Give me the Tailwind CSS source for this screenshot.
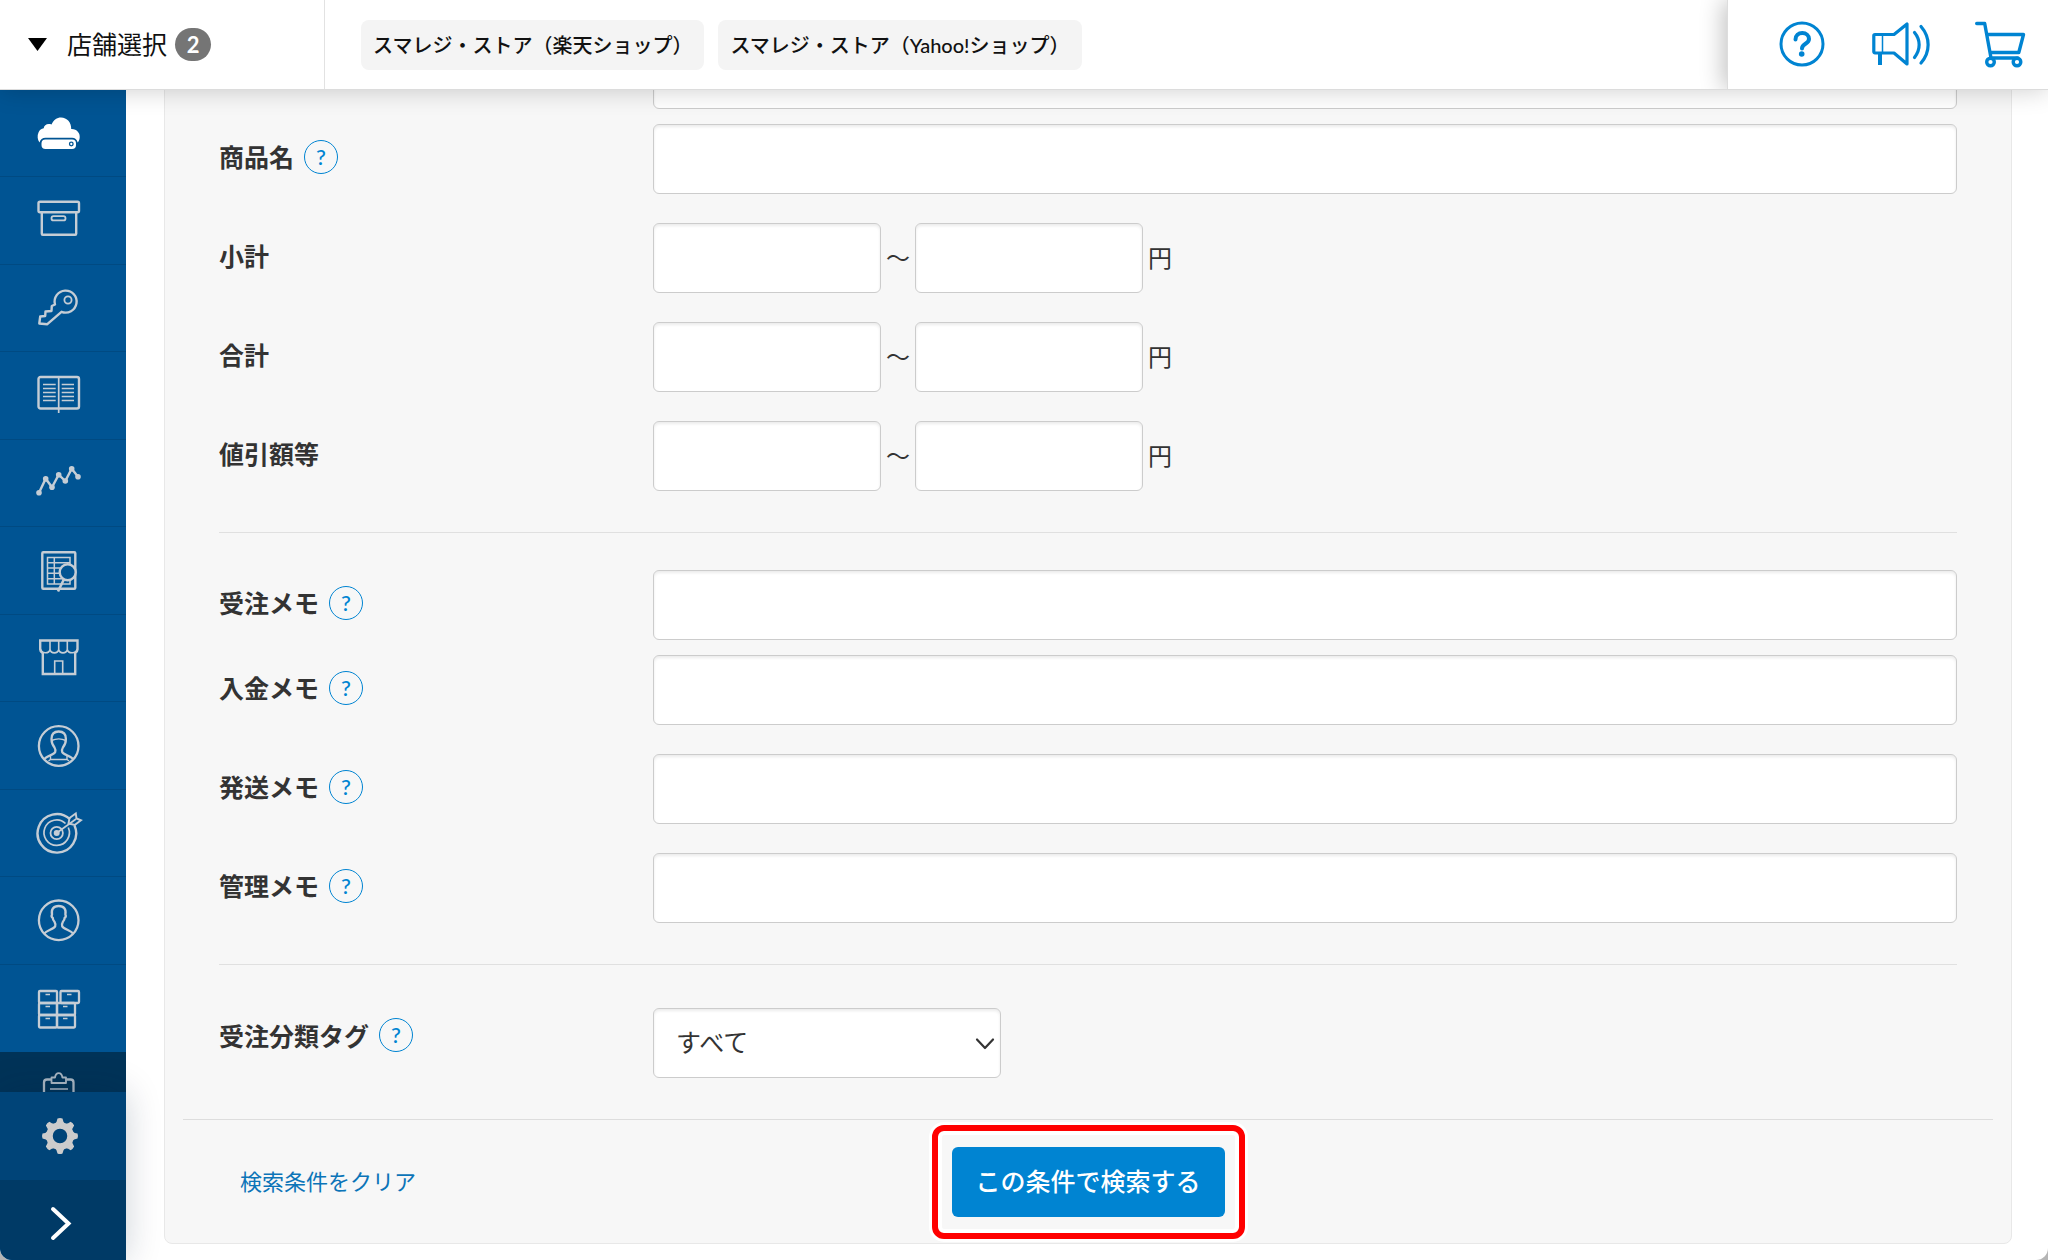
<!DOCTYPE html>
<html lang="ja" class="bg-[#b5b5b5]">
<head>
    <meta charset="UTF-8">
    <meta name="viewport" content="width=device-width, initial-scale=1.0">
    <title>受注検索</title>
    <script src="https://cdn.jsdelivr.net/npm/@tailwindcss/browser@4"></script>
</head>
<body class="h-screen flex flex-col overflow-hidden rounded-b-xl bg-white text-[#333] text-2xl font-['Lato','Noto_Sans_CJK_JP',sans-serif]">

    <!-- Top bar -->
    <header class="relative z-20 flex h-[90px] shrink-0 border-b border-[#dcdcdc] bg-white shadow-[0_0_24px_rgba(0,0,0,0.2)]">
        <button type="button" class="flex w-[325px] shrink-0 items-center border-r border-[#e2e2e2] pl-7 text-[25px] text-[#111]">
            <svg class="mr-5 h-[13px] w-[19px]" viewBox="0 0 19 13" fill="#000"><path d="M0 0h19L9.500 13z"/></svg>
            店舗選択
            <span class="ml-2 flex h-[33px] w-9 items-center justify-center rounded-full bg-[#757575] text-[22px] font-bold text-white">2</span>
        </button>
        <div class="flex flex-1 items-center gap-[14px] overflow-hidden pl-9 text-xl font-medium text-[#111]">
            <span class="flex h-[50px] items-center rounded-lg bg-[#f4f4f4] px-3 whitespace-nowrap">スマレジ・ストア（楽天ショップ）</span>
            <span class="flex h-[50px] items-center rounded-lg bg-[#f4f4f4] px-3 whitespace-nowrap">スマレジ・ストア（Yahoo!ショップ）</span>
        </div>
        <div class="flex items-center gap-11 border-l border-[#ddd] bg-white pr-[22px] pl-[50px] text-[#0084d2] shadow-[-4px_0_22px_rgba(0,0,0,0.24)] [clip-path:inset(0_0_0_-30px)]">
            <a href="#" aria-label="ヘルプ">
                <svg class="h-12 w-12" viewBox="0 0 48 48" fill="none" stroke="currentColor" stroke-width="3" stroke-linecap="round">
                    <circle cx="24" cy="23" r="21"/>
                    <path d="M17.500 18.500c0-4 3-6.500 6.800-6.500s6.700 2.500 6.700 6c0 5-7 4.500-7 9.500" stroke-width="4"/>
                    <circle cx="23.700" cy="33" r="2.800" fill="currentColor" stroke="none"/>
                </svg>
            </a>
            <a href="#" aria-label="お知らせ">
                <svg class="h-12 w-[60px]" viewBox="-1.500 0 60 48" fill="none" stroke="currentColor" stroke-width="3.200" stroke-linecap="round" stroke-linejoin="round">
                    <path d="M3.500 13.500h19L35.500 3v40L22.500 32h-19a1.200 1.200 0 0 1-1.200-1.200V14.700a1.200 1.200 0 0 1 1.200-1.200z"/>
                    <path d="M11 14v18" stroke-width="1.500"/>
                    <path d="M8.500 32v12" stroke-width="4" stroke-linecap="butt"/>
                    <path d="M43 11.500c6.200 7.500 6.200 17 0 25M49.500 5.500c9.500 11 9.500 25.500 0 36.500"/>
                </svg>
            </a>
            <a href="#" aria-label="カート">
                <svg class="h-12 w-[52px]" viewBox="0 0 52 48" fill="none" stroke="currentColor" stroke-width="3.400" stroke-linecap="round" stroke-linejoin="round">
                    <path d="M2.700 2.500h8L17 37M13 13.500h36.500L44.800 31.500H16M17 37h27"/>
                    <circle cx="16.500" cy="41" r="3.800"/>
                    <circle cx="43" cy="41" r="3.800"/>
                </svg>
            </a>
        </div>
    </header>

    <div class="flex min-h-0 flex-1">

        <!-- Side menu -->
        <aside class="relative z-10 flex w-[126px] shrink-0 flex-col bg-[#005493] text-[#c5cdd5]">
            <nav class="flex min-h-0 flex-1 flex-col overflow-hidden">
                <a href="#" aria-label="クラウド" class="flex h-[87px] shrink-0 items-center justify-center border-b border-[#004a82] pr-2 text-white">
                    <svg class="size-12" viewBox="0 0 48 48" fill="currentColor">
                        <path d="M4.500 33.500C2.500 31 2 26.500 3.500 23.500 4.500 21 6.500 19.500 8.700 19.300 9 16 12.500 14 16.500 15.500 18.500 11 22 8.500 26 8.500c6 0 10.500 5 10.200 11.500 5.500-.3 9 4 8.500 8.500-.2 2-.8 3.700-2 5-.7-3-2.700-4.800-5.700-4.800H10.500c-3 0-5.300 1.800-6 4.800z"/>
                        <rect x="6.500" y="30.500" width="34.500" height="9.500" rx="4"/>
                        <circle cx="36.300" cy="35" r="1.800" fill="none" stroke="#005493" stroke-width="1.300"/>
                    </svg>
                </a>
                <a href="#" aria-label="商品" class="flex h-[88px] shrink-0 items-center justify-center border-b border-[#004a82] pr-2">
                    <svg class="size-12" viewBox="0 0 48 48" fill="none" stroke="currentColor" stroke-width="2.400" stroke-linejoin="round">
                        <path d="M5 4.700h37.500c1 0 1.500.5 1.500 1.500v7.500c0 1-.5 1.500-1.500 1.500H5c-1 0-1.500-.5-1.500-1.500V6.200c0-1 .5-1.500 1.500-1.500zM6.800 15.200v21.500c0 .7.400 1 1 1h32.400c.6 0 1-.3 1-1V15.200"/>
                        <rect x="16.500" y="19.200" width="14" height="4.200" rx="2" stroke-width="1.800"/>
                    </svg>
                </a>
                <a href="#" aria-label="権限" class="flex h-[87px] shrink-0 items-center justify-center border-b border-[#004a82] pr-2">
                    <svg class="size-12" viewBox="0 0 48 48" fill="none" stroke="currentColor" stroke-width="2.400" stroke-linejoin="round">
                        <path d="M20 20.500l-3.200 1.500-.3 5-6 .5-.3 4.500-5 .5L4.300 39.500l8 .7 14.200-12.400A11 11 0 1 0 20 20.500z"/>
                        <circle cx="33" cy="16" r="3.600" stroke-width="1.800"/>
                    </svg>
                </a>
                <a href="#" aria-label="台帳" class="flex h-[88px] shrink-0 items-center justify-center border-b border-[#004a82] pr-2">
                    <svg class="size-12" viewBox="0 0 48 48" fill="none" stroke="currentColor" stroke-width="2.400">
                        <rect x="3.500" y="5" width="40.500" height="31.500" rx="2"/>
                        <path d="M23.700 5v36" stroke-width="1.700"/>
                        <path d="M8 12.500h12.700M8 16.500h12.700M8 20.500h12.700M8 24.500h12.700M8 28.500h12.700M26.700 12.500H39M26.700 16.500H39M26.700 20.500H39M26.700 24.500H39M26.700 28.500H39" stroke-width="1.300"/>
                    </svg>
                </a>
                <a href="#" aria-label="売上分析" class="flex h-[87px] shrink-0 items-center justify-center border-b border-[#004a82] pr-2">
                    <svg class="size-12" viewBox="0 0 48 48" fill="currentColor">
                        <path d="M4 33.700l6.700-14 6.300 8.600 6.700-12.600 6.600 6.300 6.400-12.300 6.300 8" fill="none" stroke="currentColor" stroke-width="2.400"/>
                        <circle cx="4" cy="33.700" r="2.800"/><circle cx="10.700" cy="19.700" r="2.800"/><circle cx="17" cy="28.300" r="2.800"/><circle cx="23.700" cy="15.700" r="2.800"/><circle cx="30.300" cy="22" r="2.800"/><circle cx="36.700" cy="9.700" r="2.800"/><circle cx="43" cy="17.700" r="2.800"/>
                    </svg>
                </a>
                <a href="#" aria-label="帳票検索" class="flex h-[88px] shrink-0 items-center justify-center border-b border-[#004a82] pr-2">
                    <svg class="size-12" viewBox="0 0 48 48" fill="none" stroke="currentColor" stroke-width="2.400">
                        <rect x="7.300" y="5.300" width="33" height="36.500" rx="1"/>
                        <path d="M12.500 10.500H35V37H12.500zM12.500 15.700H35M12.500 21H35M12.500 26.300H35M12.500 31.700H35M19.300 10.500V37" stroke-width="1.500"/>
                        <path d="M28.800 32.500L23 44.500" stroke-width="2.600"/>
                        <circle cx="32.700" cy="25.300" r="8" fill="#005493"/>
                    </svg>
                </a>
                <a href="#" aria-label="店舗" class="flex h-[87px] shrink-0 items-center justify-center border-b border-[#004a82] pr-2">
                    <svg class="size-12" viewBox="0 0 48 48" fill="none" stroke="currentColor" stroke-width="2.400">
                        <path d="M7.800 18.500V40h32.400V18.500M7.500 19C6 18 5.200 17 5.200 15.500V6.500h37.300v9c0 1.500-.8 2.500-2.300 3.500"/>
                        <path d="M5.500 15c1 5 8.500 5 9.500.5 1 4.500 7.700 4.500 8.700 0 1 4.500 7.600 4.500 8.600 0 1 4.500 9 4.500 10-.5M15 6.500v9M23.700 6.500v9M32.300 6.500v9M19.700 40V27h8v13" stroke-width="1.600"/>
                    </svg>
                </a>
                <a href="#" aria-label="スタッフ" class="flex h-[88px] shrink-0 items-center justify-center border-b border-[#004a82] pr-2">
                    <svg class="size-12" viewBox="0 0 48 48" fill="none" stroke="currentColor" stroke-width="2.300">
                        <circle cx="23.700" cy="24" r="19.800"/>
                        <path d="M9.500 37c2-2.800 9.500-4.300 10.700-7 .5-1.500.2-3-.7-4.500-2-2.500-3-5-3-8.500 0-5 2.500-7.500 7.200-7.500s7.200 2.500 7.200 7.500c0 3.500-1 6-3 8.500-.9 1.500-1.200 3-.7 4.500 1.200 2.700 8.700 4.200 10.700 7"/>
                        <path d="M16.500 18.500c4.500-2 10-2 14.400 0M15.500 33.500v4h16.500v-4M13.500 39l2-1.500M34 39l-2-1.500" stroke-width="1.400"/>
                    </svg>
                </a>
                <a href="#" aria-label="販促" class="flex h-[87px] shrink-0 items-center justify-center border-b border-[#004a82] pr-2">
                    <svg class="size-12" viewBox="0 0 48 48" fill="none" stroke="currentColor" stroke-width="2.400">
                        <path d="M35 10.200A19.300 19.300 0 1 0 39.500 16.500"/>
                        <path d="M30.500 14.500A12.700 12.700 0 1 0 33.300 18.500" stroke-width="1.700"/>
                        <circle cx="21.700" cy="24" r="6.200" stroke-width="1.800"/>
                        <circle cx="21.700" cy="24" r="3" fill="currentColor" stroke="none"/>
                        <path d="M21.700 24L41 10" stroke-width="1.600"/>
                        <path d="M33.500 14.500l1-5.500 6.300-4.500.7 5 4.500 1.800-6.300 4.700z" stroke-width="1.900"/>
                    </svg>
                </a>
                <a href="#" aria-label="会員" class="flex h-[88px] shrink-0 items-center justify-center border-b border-[#004a82] pr-2">
                    <svg class="size-12" viewBox="0 0 48 48" fill="none" stroke="currentColor" stroke-width="2.300">
                        <circle cx="23.700" cy="23.300" r="19.800"/>
                        <path d="M9.500 36.500c2-3 9.500-4.500 10.700-7.200.5-1.500.2-3-.7-4.500-1-1-1.700-2-1.700-3.800-1.500-1-1.300-2.500-.8-3.500-1-5.500 1.500-8.500 6.700-8.500s7.700 3 6.700 8.500c.5 1 .7 2.500-.8 3.500 0 1.800-.7 2.800-1.700 3.800-.9 1.500-1.200 3-.7 4.500 1.200 2.700 8.700 4.200 10.700 7.200"/>
                    </svg>
                </a>
                <a href="#" aria-label="在庫" class="flex h-[87px] shrink-0 items-center justify-center pr-2">
                    <svg class="size-12" viewBox="0 0 48 48" fill="none" stroke="currentColor" stroke-width="2.300">
                        <rect x="4" y="6" width="18" height="12" rx="1"/><rect x="25.500" y="6" width="18.500" height="12" rx="1"/>
                        <rect x="4" y="18" width="18" height="12" rx="1"/><rect x="22" y="18" width="18" height="12" rx="1"/>
                        <rect x="4" y="30" width="18" height="12.500" rx="1"/><rect x="22" y="30" width="18" height="12.500" rx="1"/>
                        <path d="M10.500 9.500h4.500M32 9.500h4.500M10.500 21.500h4.500M28 21.500h4.500M10.500 33.500h4.500M28 33.500h4.500" stroke-width="1.500"/>
                    </svg>
                </a>
                <a href="#" aria-label="受注" class="flex h-[88px] shrink-0 items-center justify-center bg-[#003358] pr-2 text-[#a9b6c2]">
                    <svg class="size-12" viewBox="0 0 48 48" fill="none" stroke="currentColor" stroke-width="2.300" stroke-linejoin="round">
                        <path d="M16 7.500h-4c-2 0-3 1-3 3V46h29.500V10.500c0-2-1-3-3-3h-4"/>
                        <path d="M16.500 11V5.500h3.500c.5-3 2-4.300 3.700-4.300s3.200 1.300 3.700 4.300H31V11z" stroke-width="1.800"/>
                        <path d="M15 17h18M15 23h18M15 29h18" stroke-width="1.400"/>
                    </svg>
                </a>
            </nav>
            <div class="shrink-0 overflow-hidden rounded-bl-xl shadow-[0_0_36px_rgba(0,30,60,0.2)]">
                <a href="#" aria-label="設定" class="flex h-[88px] items-center justify-center bg-[#004478] pr-1.5 text-[#ccc]">
                    <svg class="size-12" viewBox="-24 -24 48 48" fill="currentColor">
                        <circle r="10.500" fill="none" stroke="currentColor" stroke-width="6.500"/>
                        <g id="teeth">
                            <path id="tooth" d="M-5.500-12Q-3-13.500-2.500-17.500q2.500-1 5 0Q3-13.500 5.500-12z"/>
                            <use href="#tooth" transform="rotate(45)"/><use href="#tooth" transform="rotate(90)"/><use href="#tooth" transform="rotate(135)"/>
                        </g>
                        <use href="#teeth" transform="rotate(180)"/>
                    </svg>
                </a>
                <button type="button" aria-label="メニューを開く" class="flex h-20 w-full justify-center bg-[#003a66] pt-6 pr-1 text-white">
                    <svg class="h-10 w-6" viewBox="0 0 24 40" fill="none" stroke="currentColor" stroke-width="4" stroke-linecap="round"><path d="M4 5l15.500 14.500L4 34"/></svg>
                </button>
            </div>
        </aside>

        <!-- Search form, scrolled to its end -->
        <main class="flex min-w-0 flex-1 flex-col justify-end overflow-hidden pr-9 pb-4 pl-[38px]">
            <form class="rounded-lg border border-[#e8e8e8] bg-[#f7f7f7] px-[18px]">
                <div class="px-9">
                    <div class="mb-[15px] flex pl-[434px]">
                        <input type="text" aria-label="商品コード" class="h-[70px] min-w-0 flex-1 rounded-md border border-[#ccc] bg-white px-5 shadow-[inset_0_2px_3px_rgba(0,0,0,0.08)]">
                    </div>
                    <div class="mb-[29px] flex items-center">
                        <div class="flex w-[434px] shrink-0 items-center gap-2.5 pb-1">
                            <label for="name" class="pt-0.5 text-[25px] font-bold">商品名</label>
                            <button type="button" aria-label="ヘルプ" class="size-[34px] rounded-full border border-[#0084d2] text-[22px] leading-8 font-medium text-[#0084d2]">?</button>
                        </div>
                        <input id="name" type="text" class="h-[70px] min-w-0 flex-1 rounded-md border border-[#ccc] bg-white px-5 shadow-[inset_0_2px_3px_rgba(0,0,0,0.08)]">
                    </div>
                    <div class="mb-[29px] flex items-center">
                        <label for="subtotal" class="w-[434px] shrink-0 pb-0.5 text-[25px] font-bold">小計</label>
                        <input id="subtotal" type="text" class="h-[70px] w-[228px] rounded-md border border-[#ccc] bg-white px-5 shadow-[inset_0_2px_3px_rgba(0,0,0,0.08)]">
                        <span class="w-[34px] text-center">〜</span>
                        <input type="text" aria-label="小計の上限" class="h-[70px] w-[228px] rounded-md border border-[#ccc] bg-white px-5 shadow-[inset_0_2px_3px_rgba(0,0,0,0.08)]">
                        <span class="ml-[5px]">円</span>
                    </div>
                    <div class="mb-[29px] flex items-center">
                        <label for="total" class="w-[434px] shrink-0 pb-0.5 text-[25px] font-bold">合計</label>
                        <input id="total" type="text" class="h-[70px] w-[228px] rounded-md border border-[#ccc] bg-white px-5 shadow-[inset_0_2px_3px_rgba(0,0,0,0.08)]">
                        <span class="w-[34px] text-center">〜</span>
                        <input type="text" aria-label="合計の上限" class="h-[70px] w-[228px] rounded-md border border-[#ccc] bg-white px-5 shadow-[inset_0_2px_3px_rgba(0,0,0,0.08)]">
                        <span class="ml-[5px]">円</span>
                    </div>
                    <div class="flex items-center">
                        <label for="discount" class="w-[434px] shrink-0 pb-0.5 text-[25px] font-bold">値引額等</label>
                        <input id="discount" type="text" class="h-[70px] w-[228px] rounded-md border border-[#ccc] bg-white px-5 shadow-[inset_0_2px_3px_rgba(0,0,0,0.08)]">
                        <span class="w-[34px] text-center">〜</span>
                        <input type="text" aria-label="値引額等の上限" class="h-[70px] w-[228px] rounded-md border border-[#ccc] bg-white px-5 shadow-[inset_0_2px_3px_rgba(0,0,0,0.08)]">
                        <span class="ml-[5px]">円</span>
                    </div>

                    <hr class="mt-[41px] mb-[37px] border-[#e0e0e0]">

                    <div class="mb-[15px] flex items-center">
                        <div class="flex w-[434px] shrink-0 items-center gap-2.5 pb-1">
                            <label for="order-memo" class="pt-0.5 text-[25px] font-bold">受注メモ</label>
                            <button type="button" aria-label="ヘルプ" class="size-[34px] rounded-full border border-[#0084d2] text-[22px] leading-8 font-medium text-[#0084d2]">?</button>
                        </div>
                        <input id="order-memo" type="text" class="h-[70px] min-w-0 flex-1 rounded-md border border-[#ccc] bg-white px-5 shadow-[inset_0_2px_3px_rgba(0,0,0,0.08)]">
                    </div>
                    <div class="mb-[29px] flex items-center">
                        <div class="flex w-[434px] shrink-0 items-center gap-2.5 pb-1">
                            <label for="payment-memo" class="pt-0.5 text-[25px] font-bold">入金メモ</label>
                            <button type="button" aria-label="ヘルプ" class="size-[34px] rounded-full border border-[#0084d2] text-[22px] leading-8 font-medium text-[#0084d2]">?</button>
                        </div>
                        <input id="payment-memo" type="text" class="h-[70px] min-w-0 flex-1 rounded-md border border-[#ccc] bg-white px-5 shadow-[inset_0_2px_3px_rgba(0,0,0,0.08)]">
                    </div>
                    <div class="mb-[29px] flex items-center">
                        <div class="flex w-[434px] shrink-0 items-center gap-2.5 pb-1">
                            <label for="shipping-memo" class="pt-0.5 text-[25px] font-bold">発送メモ</label>
                            <button type="button" aria-label="ヘルプ" class="size-[34px] rounded-full border border-[#0084d2] text-[22px] leading-8 font-medium text-[#0084d2]">?</button>
                        </div>
                        <input id="shipping-memo" type="text" class="h-[70px] min-w-0 flex-1 rounded-md border border-[#ccc] bg-white px-5 shadow-[inset_0_2px_3px_rgba(0,0,0,0.08)]">
                    </div>
                    <div class="flex items-center">
                        <div class="flex w-[434px] shrink-0 items-center gap-2.5 pb-1">
                            <label for="admin-memo" class="pt-0.5 text-[25px] font-bold">管理メモ</label>
                            <button type="button" aria-label="ヘルプ" class="size-[34px] rounded-full border border-[#0084d2] text-[22px] leading-8 font-medium text-[#0084d2]">?</button>
                        </div>
                        <input id="admin-memo" type="text" class="h-[70px] min-w-0 flex-1 rounded-md border border-[#ccc] bg-white px-5 shadow-[inset_0_2px_3px_rgba(0,0,0,0.08)]">
                    </div>

                    <hr class="mt-[41px] mb-[43px] border-[#e0e0e0]">

                    <div class="mb-[41px] flex items-start">
                        <div class="flex w-[434px] shrink-0 items-center gap-2.5 pt-2.5">
                            <label for="tag" class="pt-0.5 text-[25px] leading-8 font-bold">受注分類タグ</label>
                            <button type="button" aria-label="ヘルプ" class="size-[34px] rounded-full border border-[#0084d2] text-[22px] leading-8 font-medium text-[#0084d2]">?</button>
                        </div>
                        <div class="relative">
                            <select id="tag" class="h-[70px] w-[348px] appearance-none rounded-md border border-[#ccc] bg-white pr-12 pl-[22px] text-[25px] shadow-[inset_0_2px_3px_rgba(0,0,0,0.08)]">
                                <option>すべて</option>
                            </select>
                            <svg class="pointer-events-none absolute top-7 right-1.5 h-4 w-5" viewBox="0 0 20 16" fill="none" stroke="#333" stroke-width="2.200" stroke-linecap="round" stroke-linejoin="round"><path d="M2 3.500l8 8.500 8-8.500"/></svg>
                        </div>
                    </div>
                </div>

                <div class="grid grid-cols-[1fr_auto_1fr] items-center border-t border-[#ddd] pt-[27px] pb-[26px]">
                    <a href="#" class="justify-self-start pl-[57px] text-[22px] leading-8 text-[#0b74b8]">検索条件をクリア</a>
                    <div class="relative">
                        <button type="submit" class="h-[70px] w-[273px] rounded-md bg-[#0084d2] text-[25px] font-medium text-white">この条件で検索する</button>
                        <!-- highlight frame -->
                        <div class="pointer-events-none absolute -inset-x-5 -inset-y-[22px] rounded-xl border-6 border-[#f00] shadow-[0_0_0_3px_#fff,inset_0_0_0_4px_#fff]"></div>
                    </div>
                </div>
            </form>
        </main>
    </div>
</body>
</html>
